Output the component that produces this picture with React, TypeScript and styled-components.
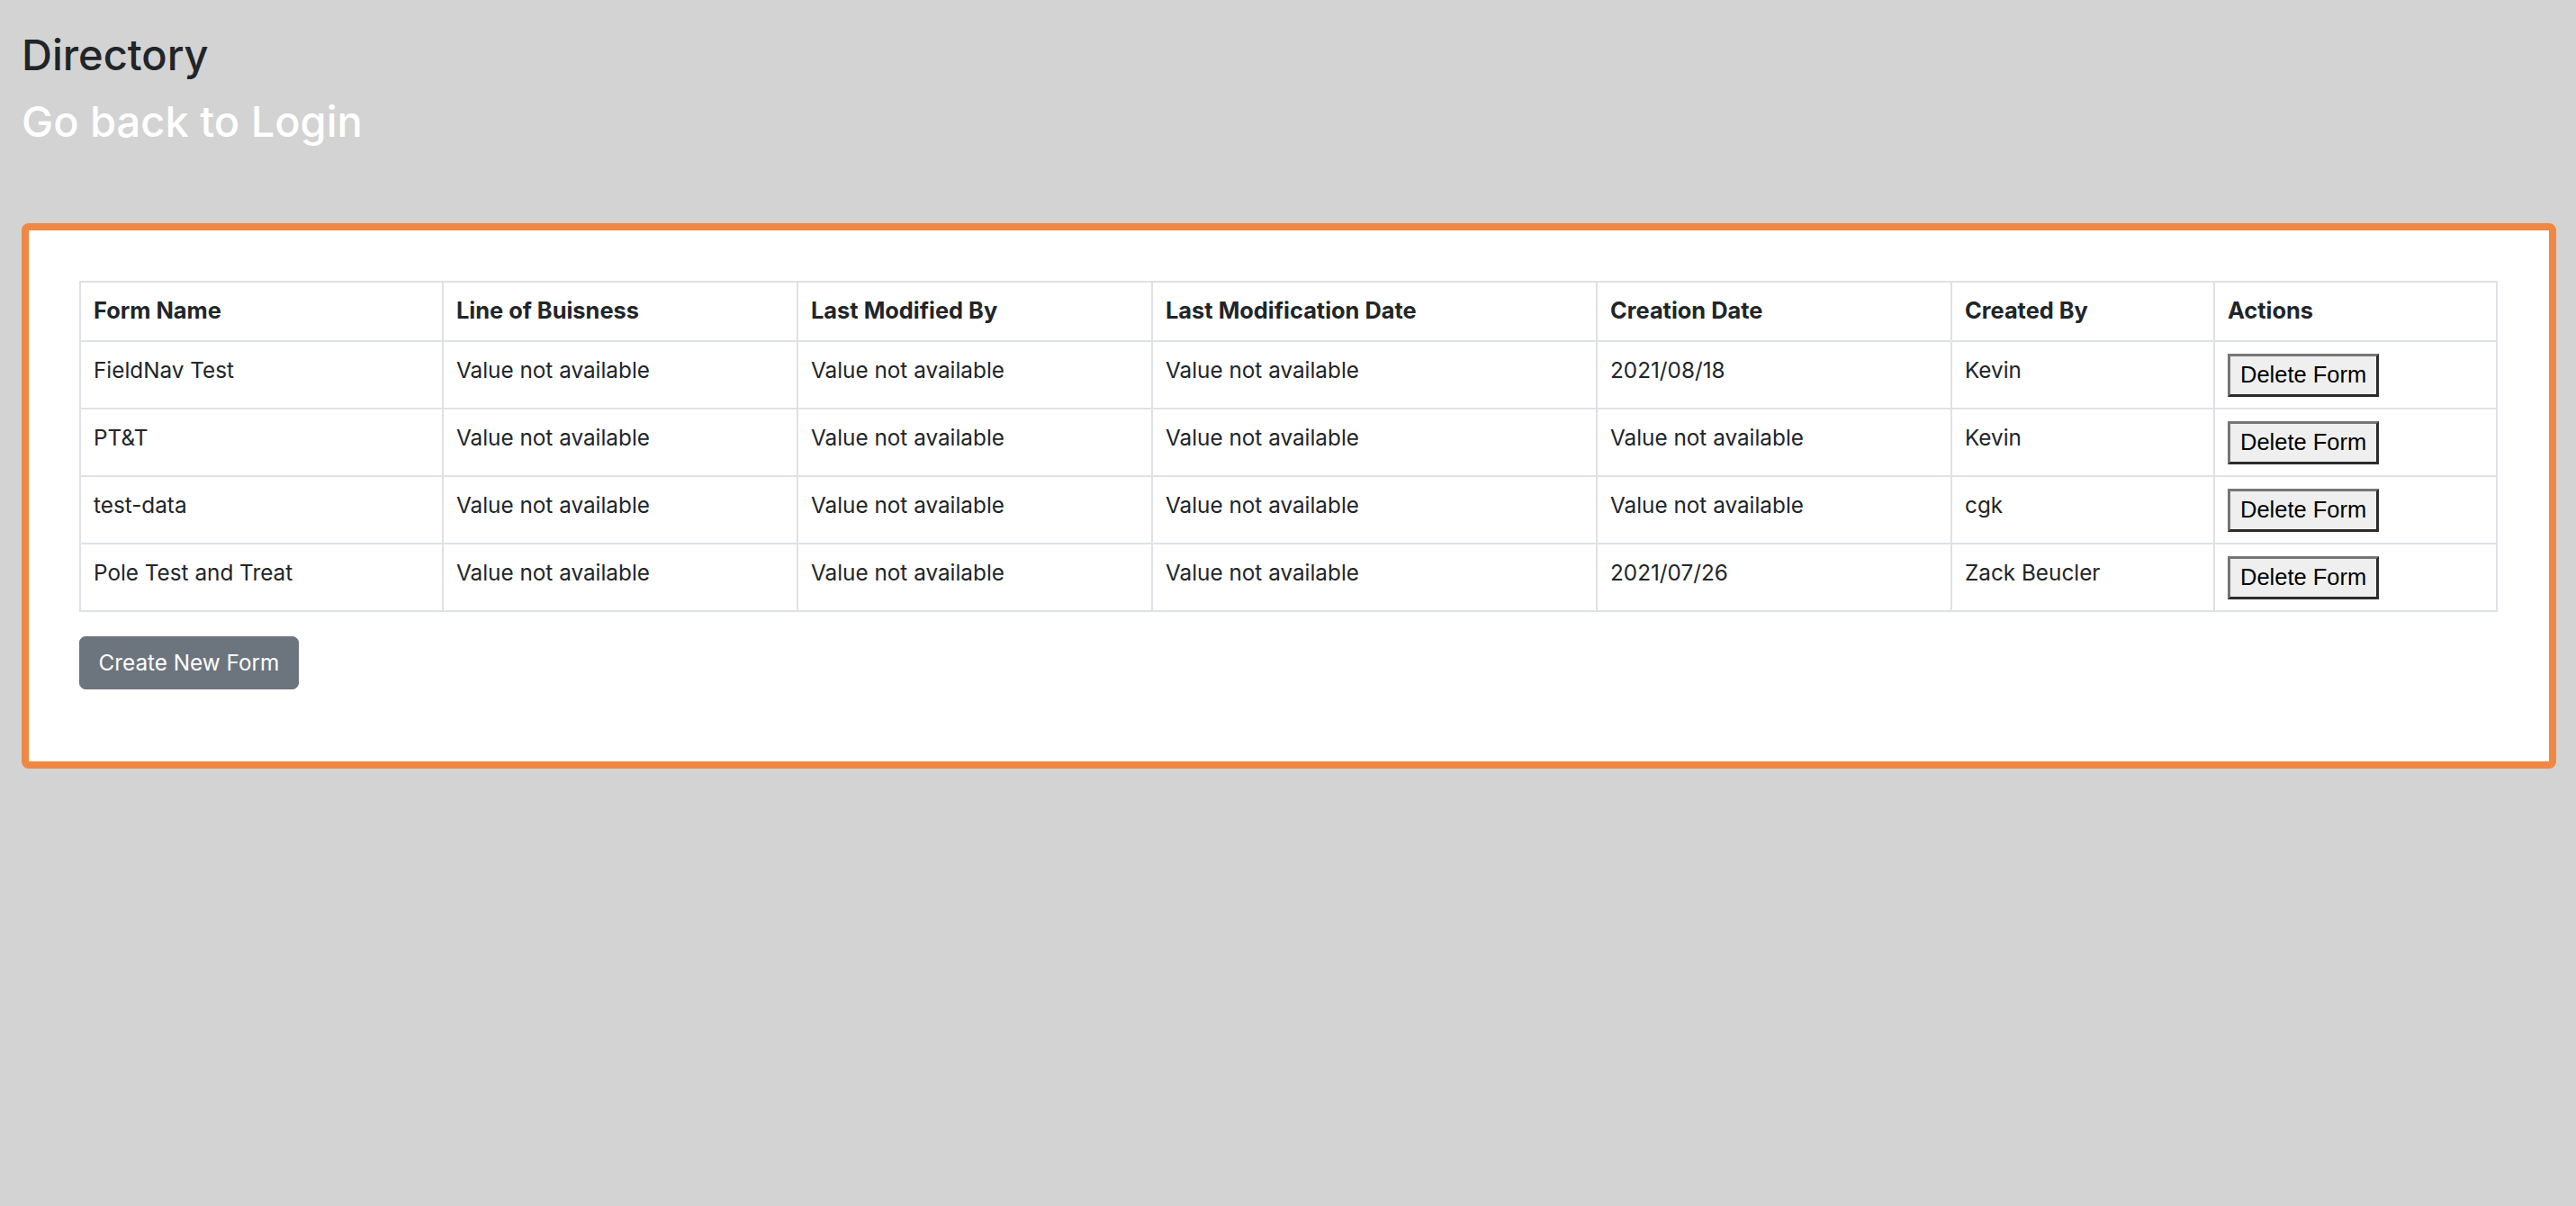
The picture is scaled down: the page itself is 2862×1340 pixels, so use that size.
import React from "react";
import styled, { createGlobalStyle } from "styled-components";

const GlobalStyle = createGlobalStyle`
  html, body {
    margin: 0;
    padding: 0;
    background: #d3d3d3;
  }
  body {
    font-family: Inter, "Noto Sans", sans-serif;
    color: #212529;
  }
  * { box-sizing: border-box; }
`;

const Page = styled.div`
  padding: 32px 22px 0 24px;
  min-height: 1340px;
  background: #d3d3d3;
`;

const Title = styled.h2<{ $light?: boolean }>`
  margin: 0 0 16px;
  font-family: Inter, "Noto Sans", sans-serif;
  font-size: 47px;
  line-height: 58px;
  font-weight: 500;
  color: ${(p) => (p.$light ? "#ffffff" : "#212529")};
`;

const BackLink = styled(Title).attrs({ as: "a", href: "#" })`
  display: block;
  text-decoration: none;
  margin-bottom: 84px;
`;

const Card = styled.section`
  background: #ffffff;
  border: 8px solid #f08742;
  border-radius: 8px;
  padding: 56px 57px 56px 56px;
`;

const Table = styled.table`
  width: 100%;
  table-layout: fixed;
  border-collapse: collapse;
  margin: 0 0 27px;
  font-size: 24.3px;
  line-height: 1.5;
  color: #212529;
`;

const HeadCell = styled.th`
  border: 2px solid #dee2e6;
  padding: 13px 14px 14.5px;
  text-align: left;
  vertical-align: top;
  font-size: 25.4px;
  line-height: 36.45px;
  font-weight: 700;
  white-space: nowrap;
`;

const Cell = styled.td`
  border: 2px solid #dee2e6;
  padding: 13px 14px 12px;
  vertical-align: top;
  font-weight: 400;
  white-space: nowrap;
`;

const DeleteButton = styled.button`
  display: inline-block;
  height: 48px;
  padding: 0 11px;
  background: #efefef;
  color: #000000;
  font-family: "Liberation Sans", Arial, sans-serif;
  font-size: 25.5px;
  line-height: 1;
  border-style: solid;
  border-width: 3px;
  border-color: #767676 #2b2b2b #2b2b2b #767676;
  border-radius: 0;
  cursor: pointer;
`;

const CreateButton = styled.button`
  display: inline-block;
  padding: 10.5px 20.5px;
  background: #6c757d;
  color: #ffffff;
  border: 1.5px solid #6c757d;
  border-radius: 7px;
  font-family: Inter, "Noto Sans", sans-serif;
  font-size: 24.3px;
  line-height: 1.5;
  font-weight: 400;
  margin-bottom: 24px;
  cursor: pointer;
`;

const columns = [
  { label: "Form Name", width: 403 },
  { label: "Line of Buisness", width: 394 },
  { label: "Last Modified By", width: 394 },
  { label: "Last Modification Date", width: 494 },
  { label: "Creation Date", width: 394 },
  { label: "Created By", width: 292 },
  { label: "Actions", width: 0 },
];

const NA = "Value not available";

const rows = [
  ["FieldNav Test", NA, NA, NA, "2021/08/18", "Kevin"],
  ["PT&T", NA, NA, NA, NA, "Kevin"],
  ["test-data", NA, NA, NA, NA, "cgk"],
  ["Pole Test and Treat", NA, NA, NA, "2021/07/26", "Zack Beucler"],
];

export default function App() {
  return (
    <>
      <GlobalStyle />
      <Page>
        <Title>Directory</Title>
        <BackLink $light>Go back to Login</BackLink>
        <Card>
          <Table>
            <colgroup>
              {columns.map((c) => (
                <col key={c.label} style={c.width ? { width: `${c.width}px` } : undefined} />
              ))}
            </colgroup>
            <thead>
              <tr>
                {columns.map((c) => (
                  <HeadCell key={c.label}>{c.label}</HeadCell>
                ))}
              </tr>
            </thead>
            <tbody>
              {rows.map((r, i) => (
                <tr key={i}>
                  {r.map((v, j) => (
                    <Cell key={j}>{v}</Cell>
                  ))}
                  <Cell>
                    <DeleteButton type="button">Delete Form</DeleteButton>
                  </Cell>
                </tr>
              ))}
            </tbody>
          </Table>
          <CreateButton type="button">Create New Form</CreateButton>
        </Card>
      </Page>
    </>
  );
}
